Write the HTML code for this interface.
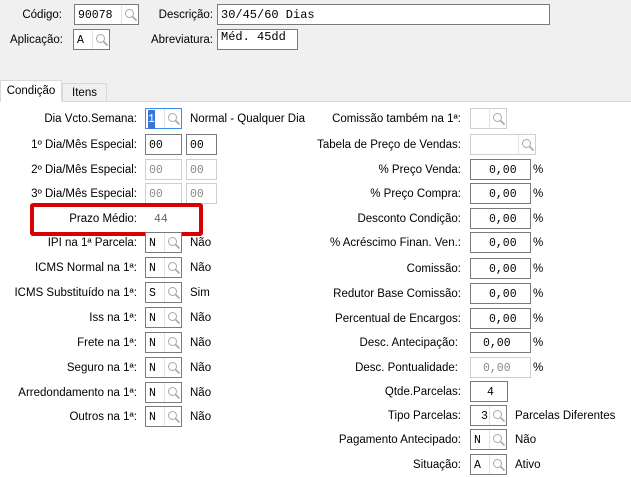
<!DOCTYPE html>
<html><head><meta charset="utf-8"><style>
body{margin:0;width:631px;height:476px;overflow:hidden;background:#f0f0f0;font-family:"Liberation Sans",sans-serif;font-size:11.5px;color:#000;position:relative}
.a{position:absolute}
.l{position:absolute;text-align:right;white-space:nowrap;line-height:20px}
.t{position:absolute;white-space:nowrap;line-height:20px}
.b{position:absolute;height:19px;border:1px solid #7a7a7a;background:#fff;font-family:"Liberation Mono",monospace;font-size:11.5px;line-height:19px;box-sizing:content-box}
.b span{position:absolute;left:3px;top:1px}
.d{border-color:#cfcfcf;color:#888}
.m{position:absolute;right:0;top:0;width:16px;height:19px;border-left:1px solid #e2e2e2}
.m svg{position:absolute;left:2px;top:3px}
#panel{position:absolute;left:0;top:101px;width:631px;height:375px;background:#fff;border-top:1px solid #d9d9d9}
</style></head><body>
<svg width="0" height="0" style="position:absolute"><defs><g id="mg"><circle cx="5.5" cy="5.5" r="4" fill="none" stroke="#a8a8a8" stroke-width="1"/><path d="M8.5 8.5 L12.5 12.5" stroke="#a8a8a8" stroke-width="1.6"/></g></defs></svg>

<div class="l" style="left:0;width:62px;top:5px">Código:</div>
<div class="b" style="left:74px;top:4px;width:63px"><span>90078</span><i class="m"><svg width="14" height="14"><use href="#mg"/></svg></i></div>
<div class="l" style="left:100px;width:113px;top:5px">Descrição:</div>
<div class="b" style="left:217px;top:4px;width:331px;font-size:12px"><span>30/45/60 Dias</span></div>
<div class="l" style="left:0;width:63px;top:30px">Aplicação:</div>
<div class="b" style="left:73px;top:29px;width:35px"><span>A</span><i class="m"><svg width="14" height="14"><use href="#mg"/></svg></i></div>
<div class="l" style="left:100px;width:113px;top:30px">Abreviatura:</div>
<div class="b" style="left:217px;top:29px;width:79px;font-size:12px"><span style="top:-2px">Méd. 45dd</span></div>

<div class="a" style="left:0;top:80px;width:62px;height:22px;background:#fff;border:1px solid #d9d9d9;border-bottom:none;box-sizing:border-box;z-index:2;text-align:center;line-height:20px">Condição</div>
<div class="a" style="left:62px;top:83px;width:45px;height:18px;background:#f0f0f0;border:1px solid #d9d9d9;border-bottom:none;box-sizing:border-box;text-align:center;line-height:18px">Itens</div>
<div id="panel"></div>

<div class="l" style="left:0;width:137px;top:109px">Dia Vcto.Semana:</div>
<div class="b" style="left:145px;top:108px;width:35px;border-color:#3a8ee6"><span style="background:#3875d7;color:#fff;left:2px">1</span><i class="m"><svg width="14" height="14"><use href="#mg"/></svg></i></div>
<div class="t" style="left:190px;top:109px">Normal - Qualquer Dia</div>

<div class="l" style="left:0;width:137px;top:135px">1º Dia/Mês Especial:</div>
<div class="b" style="left:145px;top:134px;width:35px"><span>00</span></div>
<div class="b" style="left:186px;top:134px;width:29px"><span>00</span></div>
<div class="l" style="left:0;width:137px;top:160px">2º Dia/Mês Especial:</div>
<div class="b d" style="left:145px;top:159px;width:35px"><span>00</span></div>
<div class="b d" style="left:186px;top:159px;width:29px"><span>00</span></div>
<div class="l" style="left:0;width:137px;top:184px">3º Dia/Mês Especial:</div>
<div class="b d" style="left:145px;top:183px;width:35px"><span>00</span></div>
<div class="b d" style="left:186px;top:183px;width:29px"><span>00</span></div>

<div class="a" style="left:30px;top:203px;width:173px;height:33px;border:4px solid #d80000;border-radius:3px;box-sizing:border-box"></div>
<div class="l" style="left:0;width:137px;top:209px">Prazo Médio:</div>
<div class="t" style="left:154px;top:210px;font-family:'Liberation Mono',monospace;font-size:11.5px;color:#666;">44</div>

<div class="l" style="left:0;width:137px;top:233px">IPI na 1ª Parcela:</div>
<div class="b" style="left:145px;top:232px;width:35px"><span>N</span><i class="m"><svg width="14" height="14"><use href="#mg"/></svg></i></div>
<div class="t" style="left:190px;top:233px">Não</div>
<div class="l" style="left:0;width:137px;top:258px">ICMS Normal na 1ª:</div>
<div class="b" style="left:145px;top:257px;width:35px"><span>N</span><i class="m"><svg width="14" height="14"><use href="#mg"/></svg></i></div>
<div class="t" style="left:190px;top:258px">Não</div>
<div class="l" style="left:0;width:137px;top:283px">ICMS Substituído na 1ª:</div>
<div class="b" style="left:145px;top:282px;width:35px"><span>S</span><i class="m"><svg width="14" height="14"><use href="#mg"/></svg></i></div>
<div class="t" style="left:190px;top:283px">Sim</div>
<div class="l" style="left:0;width:137px;top:308px">Iss na 1ª:</div>
<div class="b" style="left:145px;top:307px;width:35px"><span>N</span><i class="m"><svg width="14" height="14"><use href="#mg"/></svg></i></div>
<div class="t" style="left:190px;top:308px">Não</div>
<div class="l" style="left:0;width:137px;top:333px">Frete na 1ª:</div>
<div class="b" style="left:145px;top:332px;width:35px"><span>N</span><i class="m"><svg width="14" height="14"><use href="#mg"/></svg></i></div>
<div class="t" style="left:190px;top:333px">Não</div>
<div class="l" style="left:0;width:137px;top:358px">Seguro na 1ª:</div>
<div class="b" style="left:145px;top:357px;width:35px"><span>N</span><i class="m"><svg width="14" height="14"><use href="#mg"/></svg></i></div>
<div class="t" style="left:190px;top:358px">Não</div>
<div class="l" style="left:0;width:137px;top:383px">Arredondamento na 1ª:</div>
<div class="b" style="left:145px;top:382px;width:35px"><span>N</span><i class="m"><svg width="14" height="14"><use href="#mg"/></svg></i></div>
<div class="t" style="left:190px;top:383px">Não</div>
<div class="l" style="left:0;width:137px;top:407px">Outros na 1ª:</div>
<div class="b" style="left:145px;top:406px;width:35px"><span>N</span><i class="m"><svg width="14" height="14"><use href="#mg"/></svg></i></div>
<div class="t" style="left:190px;top:407px">Não</div>

<div class="l" style="left:260px;width:201px;top:109px">Comissão também na 1ª:</div>
<div class="b d" style="left:470px;top:108px;width:35px"><i class="m"><svg width="14" height="14"><use href="#mg"/></svg></i></div>
<div class="l" style="left:260px;width:201px;top:135px">Tabela de Preço de Vendas:</div>
<div class="b d" style="left:470px;top:134px;width:64px"><i class="m"><svg width="14" height="14"><use href="#mg"/></svg></i></div>

<div class="l" style="left:260px;width:201px;top:160px">% Preço Venda:</div>
<div class="b" style="left:470px;top:159px;width:59px"><span style="left:18px">0,00</span></div><div class="t" style="left:533px;top:160px">%</div>
<div class="l" style="left:260px;width:201px;top:184px">% Preço Compra:</div>
<div class="b" style="left:470px;top:183px;width:59px"><span style="left:18px">0,00</span></div><div class="t" style="left:533px;top:184px">%</div>
<div class="l" style="left:260px;width:201px;top:209px">Desconto Condição:</div>
<div class="b" style="left:470px;top:208px;width:59px"><span style="left:18px">0,00</span></div><div class="t" style="left:533px;top:209px">%</div>
<div class="l" style="left:260px;width:201px;top:233px">% Acréscimo Finan. Ven.:</div>
<div class="b" style="left:470px;top:232px;width:59px"><span style="left:18px">0,00</span></div><div class="t" style="left:533px;top:233px">%</div>
<div class="l" style="left:260px;width:201px;top:259px">Comissão:</div>
<div class="b" style="left:470px;top:258px;width:59px"><span style="left:18px">0,00</span></div><div class="t" style="left:533px;top:259px">%</div>
<div class="l" style="left:260px;width:201px;top:284px">Redutor Base Comissão:</div>
<div class="b" style="left:470px;top:283px;width:59px"><span style="left:18px">0,00</span></div><div class="t" style="left:533px;top:284px">%</div>
<div class="l" style="left:260px;width:201px;top:309px">Percentual de Encargos:</div>
<div class="b" style="left:470px;top:308px;width:59px"><span style="left:18px">0,00</span></div><div class="t" style="left:533px;top:309px">%</div>
<div class="l" style="left:260px;width:198px;top:333px">Desc. Antecipação:</div>
<div class="b" style="left:470px;top:332px;width:59px"><span style="left:12px">0,00</span></div><div class="t" style="left:533px;top:333px">%</div>
<div class="l" style="left:260px;width:198px;top:358px">Desc. Pontualidade:</div>
<div class="b d" style="left:470px;top:357px;width:59px"><span style="left:12px">0,00</span></div><div class="t" style="left:533px;top:358px">%</div>
<div class="l" style="left:260px;width:201px;top:382px">Qtde.Parcelas:</div>
<div class="b" style="left:470px;top:381px;width:36px"><span style="left:16px">4</span></div>
<div class="l" style="left:260px;width:201px;top:406px">Tipo Parcelas:</div>
<div class="b" style="left:470px;top:405px;width:35px"><span style="left:10px">3</span><i class="m"><svg width="14" height="14"><use href="#mg"/></svg></i></div>
<div class="t" style="left:515px;top:406px">Parcelas Diferentes</div>
<div class="l" style="left:260px;width:201px;top:430px">Pagamento Antecipado:</div>
<div class="b" style="left:470px;top:429px;width:35px"><span>N</span><i class="m"><svg width="14" height="14"><use href="#mg"/></svg></i></div>
<div class="t" style="left:515px;top:430px">Não</div>
<div class="l" style="left:260px;width:201px;top:455px">Situação:</div>
<div class="b" style="left:470px;top:454px;width:35px"><span>A</span><i class="m"><svg width="14" height="14"><use href="#mg"/></svg></i></div>
<div class="t" style="left:515px;top:455px">Ativo</div>
</body></html>
